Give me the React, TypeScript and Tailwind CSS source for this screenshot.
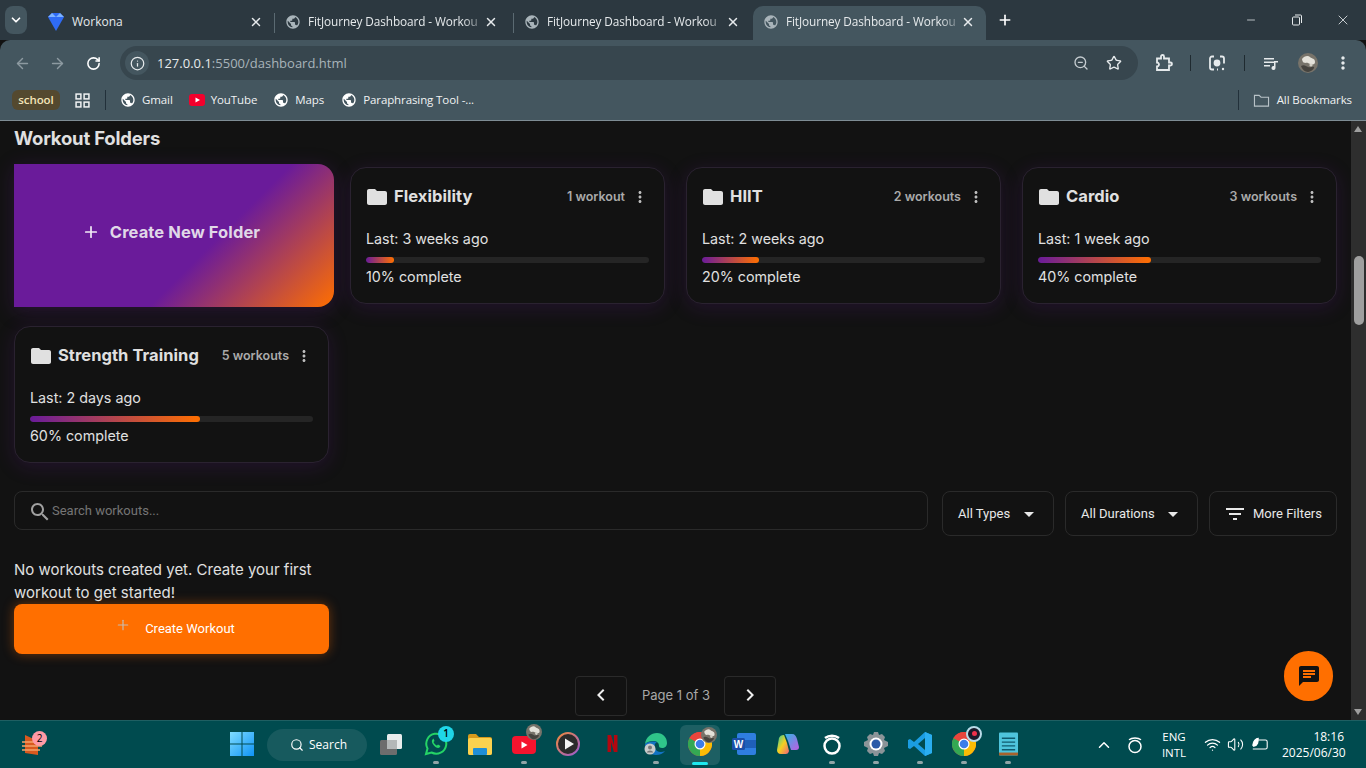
import { ArrowLeft, ArrowRight, RotateCw, Info, ZoomOut, Star, X, Plus, Minus, ChevronDown, ChevronUp, Search, Wifi, Volume2 } from "lucide-react"

const GLOBE = "M12 2C6.48 2 2 6.48 2 12s4.48 10 10 10 10-4.48 10-10S17.52 2 12 2zm-1 17.93c-3.95-.49-7-3.85-7-7.93 0-.62.08-1.21.21-1.79L9 15v1c0 1.1.9 2 2 2v1.93zm6.9-2.54c-.26-.81-1-1.39-1.9-1.39h-1v-3c0-.55-.45-1-1-1H8v-2h2c.55 0 1-.45 1-1V7h2c1.1 0 2-.9 2-2v-.41c2.93 1.19 5 4.06 5 7.41 0 2.08-.8 3.97-2.1 5.39z"
const FOLDER = "M10 4H4c-1.1 0-1.99.9-1.99 2L2 18c0 1.1.9 2 2 2h16c1.1 0 2-.9 2-2V8c0-1.1-.9-2-2-2h-8l-2-2z"
const DOTS = "M12 8c1.1 0 2-.9 2-2s-.9-2-2-2-2 .9-2 2 .9 2 2 2zm0 2c-1.1 0-2 .9-2 2s.9 2 2 2 2-.9 2-2-.9-2-2-2zm0 6c-1.1 0-2 .9-2 2s.9 2 2 2 2-.9 2-2-.9-2-2-2z"

function Mat({ d, className }: { d: string; className?: string }) {
    return (
        <svg viewBox="0 0 24 24" fill="currentColor" className={className}>
            <path d={d} />
        </svg>
    )
}

function Tab({ active, sep }: { active?: boolean; sep?: boolean }) {
    return (
        <div className={`relative flex items-center h-[34px] mt-[6px] pb-[2px] ${active ? "w-[233px] pl-[10px] pr-[11px] bg-[#44565f] rounded-t-[10px]" : sep ? "w-[239px] pl-[10px] pr-[16px]" : "w-[239px] pl-[10px] pr-[13px]"}`}>
            <Mat d={GLOBE} className="w-4 h-4 text-[#a9b4ba] shrink-0" />
            <span className="ml-[7px] flex-1 overflow-hidden whitespace-nowrap text-[11.800px] tracking-[-0.1px] text-[#e6eaec] [mask-image:linear-gradient(90deg,#000_90%,rgba(0,0,0,0.3))]">FitJourney Dashboard - Workou</span>
            <X className="w-[14px] h-[14px] ml-[4px] -mt-[1px] text-[#e6eaec] shrink-0" strokeWidth={2.5} />
            {sep && <div className="absolute right-0 top-[7px] h-[20px] w-px bg-[#5b6a72]" />}
        </div>
    )
}

function BrowserChrome() {
    return (
        <div className="shrink-0 font-['Open_Sans',sans-serif]">
            {/* tab strip */}
            <div className="h-10 bg-[#2c3840] flex items-start">
                <div className="ml-[5px] mt-[6px] w-[22px] h-[28px] rounded-lg bg-[#44565f] flex items-center justify-center">
                    <ChevronDown className="w-[14px] h-[14px] text-white" strokeWidth={3} />
                </div>
                <div className="relative flex items-center w-[248px] h-[34px] mt-[6px] pb-[2px] pl-[21px] pr-[12px]">
                    <svg viewBox="0 0 16 18" className="w-4 h-[18px] shrink-0">
                        <path d="M0 4 L4 0 H12 L16 4 L8 18 Z" fill="#2f6bf5" />
                        <path d="M0 4 L4 0 L8 4 Z M8 4 L12 0 L16 4 Z" fill="#7db2ff" />
                    </svg>
                    <span className="ml-[8px] flex-1 text-[12px] text-[#e6eaec]">Workona</span>
                    <X className="w-[14px] h-[14px] -mt-[1px] text-[#e6eaec]" strokeWidth={2.5} />
                    <div className="absolute right-0 top-[7px] h-[20px] w-px bg-[#5b6a72]" />
                </div>
                <Tab sep />
                <Tab />
                <Tab active />
                <Plus className="w-4 h-4 ml-[11px] mt-[12px] text-white" strokeWidth={2.5} />
                <div className="ml-auto flex items-center h-[40px] text-[#e6eaec]">
                    <Minus className="w-[12px] h-[12px] mr-[34px]" strokeWidth={1.5} />
                    <svg viewBox="0 0 12 12" className="w-[12px] h-[12px] mr-[32px]" fill="none" stroke="currentColor">
                        <rect x="1.5" y="3" width="7" height="8" rx="1" />
                        <path d="M4 1h5.5a1 1 0 0 1 1 1v7" />
                    </svg>
                    <X className="w-[16px] h-[16px] mr-[15px]" strokeWidth={1.25} />
                </div>
            </div>
            {/* toolbar */}
            <div className="h-10 bg-[#44565f] rounded-t-[10px] flex items-start pt-[6px]">
                <ArrowLeft className="w-[17px] h-[17px] ml-[14px] mt-[9px] text-[#8d9aa1]" />
                <ArrowRight className="w-[17px] h-[17px] ml-[18px] mt-[9px] text-[#8d9aa1]" />
                <RotateCw className="w-[15px] h-[15px] ml-[20px] mt-[10px] text-white" strokeWidth={2.5} />
                <div className="ml-[19px] w-[1018px] h-[34px] rounded-full bg-[#37464e] flex items-center pl-[5px] pr-[16px]">
                    <div className="w-[24px] h-[24px] rounded-full bg-[#44565f] flex items-center justify-center">
                        <Info className="w-[15px] h-[15px] text-[#e6eaec]" />
                    </div>
                    <span className="ml-[8px] mt-[1px] text-[13px] text-[#e6eaec]">127.0.0.1<span className="text-[#a9b4ba]">:5500/dashboard.html</span></span>
                    <ZoomOut className="ml-auto w-[16px] h-[16px] text-[#c5ccd0]" />
                    <Star className="ml-[17px] w-[16px] h-[16px] text-[#e6eaec]" />
                </div>
                <div className="flex items-center h-[34px] text-[#e6eaec]">
                    <svg viewBox="0 0 18 18" className="w-[18px] h-[18px] ml-[17px]" fill="none" stroke="currentColor" strokeWidth="1.8">
                        <path d="M2 4.5h4V2.5a1.5 1.5 0 0 1 3 0v2h5v4h1.5a1.5 1.5 0 0 1 0 3H14v4.5H2v-3.5a2 2 0 0 0 0-4z" />
                    </svg>
                    <div className="ml-[17px] w-px h-[16px] bg-[#1f2a30]" />
                    <svg viewBox="0 0 18 18" className="w-[18px] h-[18px] ml-[17px]" fill="none" stroke="currentColor" strokeWidth="1.8">
                        <path d="M6 2.5H4a2 2 0 0 0-2 2v9a2 2 0 0 0 2 2h2M12 2.5h2a2 2 0 0 1 2 2v5M9 15.5h1" />
                        <circle cx="9" cy="9" r="2.5" fill="currentColor" />
                        <circle cx="15" cy="15" r="1.2" fill="currentColor" stroke="none" />
                    </svg>
                    <div className="ml-[18px] w-px h-[16px] bg-[#1f2a30]" />
                    <svg viewBox="0 0 18 18" className="w-[18px] h-[18px] ml-[17px]" fill="currentColor">
                        <path d="M2 4h10v1.5H2zM2 7.5h10V9H2zM2 11h6v1.5H2zM12 7h4v1.5h-2.5v5.5a2 2 0 1 1-1.5-1.9z" />
                    </svg>
                    <Avatar className="w-[20px] h-[20px] ml-[18px]" />
                    <Mat d={DOTS} className="w-[20px] h-[20px] ml-[15px]" />
                </div>
            </div>
            {/* bookmarks */}
            <div className="h-[41px] bg-[#44565f] border-b border-[#7e8c94] flex items-center text-[11.500px] tracking-[-0.1px] text-[#f0f2f3]">
                <div className="ml-[12px] h-[20px] w-[48px] rounded-md bg-[#54492f] flex items-center justify-center font-semibold text-[#f3e4b8]">school</div>
                <svg viewBox="0 0 14 14" className="w-[15px] h-[15px] ml-[15px]" fill="none" stroke="currentColor" strokeWidth="1.4">
                    <rect x="1" y="1" width="4.5" height="4.5" /><rect x="8.5" y="1" width="4.5" height="4.5" />
                    <rect x="1" y="8.5" width="4.5" height="4.5" /><rect x="8.5" y="8.5" width="4.5" height="4.5" />
                </svg>
                <div className="ml-[15px] w-px h-[20px] bg-[#22303a]" />
                <Mat d={GLOBE} className="ml-[14px] w-4 h-4 text-white" />
                <span className="ml-[6px]">Gmail</span>
                <svg viewBox="0 0 16 12" className="ml-[16px] w-4 h-3">
                    <rect width="16" height="12" rx="3" fill="#f4002c" />
                    <path d="M6.5 3.5 11 6l-4.500 2.500z" fill="#fff" />
                </svg>
                <span className="ml-[6px]">YouTube</span>
                <Mat d={GLOBE} className="ml-[16px] w-4 h-4 text-white" />
                <span className="ml-[6px]">Maps</span>
                <Mat d={GLOBE} className="ml-[17px] w-4 h-4 text-white" />
                <span className="ml-[6px]">Paraphrasing Tool -...</span>
                <div className="ml-auto w-px h-[20px] bg-[#22303a]" />
                <svg viewBox="0 0 18 16" className="ml-[14px] w-[17px] h-[15px]" fill="none" stroke="#b8c2c7" strokeWidth="1.2">
                    <path d="M1.500 2.500h5l2 2h8v9.500h-15z" />
                </svg>
                <span className="ml-[7px] mr-[14px]">All Bookmarks</span>
            </div>
        </div>
    )
}

function Avatar({ className }: { className?: string }) {
    return (
        <svg viewBox="0 0 20 20" className={className}>
            <circle cx="10" cy="10" r="10" fill="#77736a" />
            <path d="M4 6c2-3 6-4 8-2s5 1 5 5-5 2-7 1-5 2-6-4z" fill="#e4e2da" />
            <path d="M3 13c3-2 5 0 7 1s5-1 6 0-3 5-6 5-6-3-7-6z" fill="#45433e" />
            <circle cx="13" cy="12" r="1.600" fill="#d2cfc5" />
        </svg>
    )
}

function FolderCard({ name, count, last, pct }: { name: string; count: string; last: string; pct: number }) {
    return (
        <div className="h-[137px] rounded-2xl bg-[#121212] border border-[#2a2230] shadow-[0_4px_20px_rgba(106,27,154,0.2)] px-[15px] pt-[15px]">
            <div className="flex items-center h-[27px]">
                <Mat d={FOLDER} className="w-6 h-6 text-[#e0e0e0] shrink-0 -ml-[1px]" />
                <span className="ml-[5px] text-[16.500px] font-bold text-[#e0e0e0] tracking-[0.05px]">{name}</span>
                <span className="ml-auto mt-[2px] text-[12.500px] font-semibold text-[#aaaaaa]">{count}</span>
                <Mat d={DOTS} className="w-[18px] h-[18px] ml-[6px] text-[#bdbdbd] shrink-0" />
            </div>
            <div className="mt-[17px] h-[23px] leading-[23px] text-[14.300px] text-[#e0e0e0]">{last}</div>
            <div className="mt-[7px] h-[6px] rounded-full bg-[#252525] overflow-hidden">
                <div className="h-full rounded-full bg-[linear-gradient(90deg,#6a1b9a,#ff6f00)]" style={{ width: `${pct}%` }} />
            </div>
            <div className="mt-[2px] h-[23px] leading-[23px] text-[14.300px] text-[#e0e0e0]">{pct}% complete</div>
        </div>
    )
}

function FilterButton({ label, w }: { label: string; w: string }) {
    return (
        <div className={`${w} h-[45px] rounded-lg border border-[#2a2a2a] flex items-center justify-between pl-[15px] pr-[14px] font-['Roboto',sans-serif] text-[13px] text-[#e8e8e8]`}>
            <span>{label}</span>
            <Mat d="M7 10l5 5 5-5z" className="w-6 h-6 -mr-[2px] text-[#e8e8e8]" />
        </div>
    )
}

function Dashboard() {
    return (
        <div className="relative flex-1 flex min-h-0 overflow-hidden bg-[#121212] font-['Inter',sans-serif]">
            <div className="flex-1 min-w-0 px-[14px] overflow-hidden">
                <h2 className="mt-[4px] h-[27px] leading-[27px] text-[18.500px] font-bold text-[#e0e0e0] tracking-[-0.2px]">Workout Folders</h2>
                <div className="mt-[15px] grid grid-cols-4 gap-x-[21px] gap-y-[22px] items-start">
                    <div className="-my-[3px] w-[320px] h-[143px] rounded-r-2xl bg-[linear-gradient(135deg,#6a1b9a_0%,#6a1b9a_60%,#ff6f00_100%)] shadow-[0_4px_20px_rgba(106,27,154,0.25)] flex items-center justify-center gap-[10px] pb-[7px] pr-[6px]">
                        <Plus className="w-[18px] h-[18px] text-[#f2ecf6]" strokeWidth={2.25} />
                        <span className="text-[16.500px] font-bold text-[#e0d8e8] tracking-[0.1px]">Create New Folder</span>
                    </div>
                    <FolderCard name="Flexibility" count="1 workout" last="Last: 3 weeks ago" pct={10} />
                    <FolderCard name="HIIT" count="2 workouts" last="Last: 2 weeks ago" pct={20} />
                    <FolderCard name="Cardio" count="3 workouts" last="Last: 1 week ago" pct={40} />
                    <FolderCard name="Strength Training" count="5 workouts" last="Last: 2 days ago" pct={60} />
                </div>
                <div className="mt-[28px] flex items-start">
                    <div className="w-[914px] h-[39px] rounded-lg border border-[#2a2a2a] flex items-center pl-[13px] font-['Roboto',sans-serif] text-[13px] text-[#757575]">
                        <Mat d="M15.5 14h-.79l-.28-.27C15.41 12.59 16 11.11 16 9.5 16 5.91 13.09 3 9.5 3S3 5.91 3 9.5 5.91 16 9.5 16c1.61 0 3.09-.59 4.23-1.57l.27.28v.79l5 4.99L20.49 19l-4.99-5zm-6 0C7.01 14 5 11.99 5 9.5S7.01 5 9.5 5 14 7.01 14 9.5 11.99 14 9.5 14z" className="w-6 h-6 text-[#a0a0a0] mt-[3px]" />
                        <span>Search workouts...</span>
                    </div>
                    <div className="ml-[14px] flex gap-[11px]">
                        <FilterButton label="All Types" w="w-[112px]" />
                        <FilterButton label="All Durations" w="w-[133px]" />
                        <div className="w-[128px] h-[45px] rounded-lg border border-[#2a2a2a] flex items-center pl-[13px] font-['Roboto',sans-serif] text-[13px] text-[#e8e8e8]">
                            <Mat d="M10 18h4v-2h-4v2zM3 6v2h18V6H3zm3 7h12v-2H6v2z" className="w-6 h-6" />
                            <span className="ml-[6px]">More Filters</span>
                        </div>
                    </div>
                </div>
                <p className="mt-[22px] w-[315px] text-[15px] leading-[23px] text-[#e0e0e0]">No workouts created yet. Create your first workout to get started!</p>
                <div className="w-[315px] h-[50px] rounded-lg bg-[#ff6f00] shadow-[0_0_12px_rgba(255,111,0,0.4)] flex items-center justify-center pl-[7px] font-['Roboto',sans-serif] text-[13px] text-white">
                    <Plus className="w-[16px] h-[16px] mr-[14px] -mt-[8px] text-[#c8bcb0]" strokeWidth={1.75} />
                    <span>Create Workout</span>
                </div>
                <div className="mt-[22px] flex items-center justify-center">
                    <div className="w-[52px] h-[40px] rounded border border-[#2a2a2a] flex items-center justify-center">
                        <Mat d="M15.41 7.41 14 6l-6 6 6 6 1.41-1.41L10.83 12z" className="w-6 h-6 -mt-[3px] text-[#eeeeee]" />
                    </div>
                    <span className="mx-[15px] w-[67px] whitespace-nowrap text-center text-[13px] text-[#a8a8a8]">Page 1 of 3</span>
                    <div className="w-[52px] h-[40px] rounded border border-[#2a2a2a] flex items-center justify-center">
                        <Mat d="M10 6 8.59 7.41 13.17 12l-4.58 4.59L10 18l6-6z" className="w-6 h-6 -mt-[3px] text-[#eeeeee]" />
                    </div>
                </div>
            </div>
            {/* scrollbar */}
            <div className="relative w-[15px] bg-[#2e2e2e] shrink-0">
                <div className="absolute left-[3px] top-[5px] w-0 h-0 border-x-[4.5px] border-x-transparent border-b-[6px] border-b-[#9f9f9f]" />
                <div className="absolute left-[3px] top-[135px] w-[10px] h-[69px] rounded-full bg-[#9f9f9f]" />
                <div className="absolute left-[3px] bottom-[5px] w-0 h-0 border-x-[4.5px] border-x-transparent border-t-[6px] border-t-[#9f9f9f]" />
            </div>
            {/* chat fab */}
            <div className="absolute right-[33px] bottom-[19px] w-[49px] h-[50px] rounded-full bg-[#ff6f00] flex items-center justify-center">
                <Mat d="M20 2H4c-1.100 0-1.990.9-1.990 2L2 22l4-4h14c1.100 0 2-.9 2-2V4c0-1.100-.9-2-2-2zM6 9h12v2H6V9zm8 5H6v-2h8v2zm4-6H6V6h12v2z" className="w-6 h-6 text-[#121212]" />
            </div>
        </div>
    )
}

function Slot({ children, dot, active }: { children: React.ReactNode; dot?: boolean; active?: boolean }) {
    return (
        <div className="relative w-[44px] h-[48px] flex items-center justify-center">
            {active && <div className="absolute left-[2px] top-[4px] w-[40px] h-[40px] rounded-md bg-[#1d5f63]" />}
            <div className="relative -mt-[2px]">{children}</div>
            {dot && <div className="absolute bottom-[5px] left-[19px] w-[6px] h-[3px] rounded-full bg-[#8fa5a7]" />}
            {active && <div className="absolute bottom-[4px] left-[14px] w-[16px] h-[3px] rounded-full bg-[#1de9f0]" />}
        </div>
    )
}

function ChromeLogo({ className }: { className?: string }) {
    return (
        <svg viewBox="0 0 24 24" className={className}>
            <circle cx="12" cy="12" r="12" fill="#e8453c" />
            <path d="M12 12 1.600 6A12 12 0 0 0 12 24z" fill="#34a853" />
            <path d="M12 12v12A12 12 0 0 0 22.400 6z" fill="#fbbc05" />
            <path d="M12 12 1.600 6A12 12 0 0 1 22.400 6z" fill="#e8453c" />
            <circle cx="12" cy="12" r="5.500" fill="#fff" />
            <circle cx="12" cy="12" r="4.300" fill="#3d7de8" />
        </svg>
    )
}

function Taskbar() {
    return (
        <div className="h-12 shrink-0 bg-[#004b4f] border-t border-[#1f5f62] flex items-center font-['Open_Sans',sans-serif] text-white">
            <div className="relative ml-[22px] w-[20px] h-[24px] shrink-0">
                <svg viewBox="0 0 20 24" className="w-[20px] h-[24px]">
                    <path d="M3 2 16 8v14L3 20z" fill="#d9591e" />
                    <path d="M0 9h18M0 13h20M0 17h18" stroke="#f4a26a" strokeWidth="1.400" />
                </svg>
                <div className="absolute -top-[2px] left-[10px] w-[15px] h-[15px] rounded-full bg-[#ff9aa5] flex items-center justify-center text-[10px] text-black">2</div>
            </div>
            <div className="ml-[178px] w-[44px] h-[48px] flex items-center justify-center shrink-0">
                <svg viewBox="0 0 24 24" className="w-[24px] h-[24px] -mt-[2px]">
                    <defs>
                        <linearGradient id="w" x1="0" y1="0" x2="1" y2="1"><stop offset="0" stopColor="#7fdcff" /><stop offset="1" stopColor="#0f94f5" /></linearGradient>
                    </defs>
                    <path d="M0 0h11.500v11.500H0zM12.500 0H24v11.500H12.500zM0 12.500h11.500V24H0zM12.500 12.500H24V24H12.500z" fill="url(#w)" />
                </svg>
            </div>
            <div className="ml-[3px] w-[100px] h-[32px] rounded-full bg-[#175a5e] flex items-center pl-[23px] text-[12px] shrink-0">
                <Search className="w-[14px] h-[14px]" strokeWidth={2} />
                <span className="ml-[5px]">Search</span>
            </div>
            <div className="ml-[2px] flex shrink-0">
                <Slot>
                    <svg viewBox="0 0 24 22" className="w-[24px] h-[22px]">
                        <rect x="8" y="1" width="15" height="15" rx="1.500" fill="#e8ecec" />
                        <rect x="1" y="7" width="17" height="15" rx="1.500" fill="#6d6d6d" />
                        <rect x="8" y="7" width="10" height="9" fill="#b4b8b8" />
                    </svg>
                </Slot>
            </div>
            <div className="ml-[1px] flex shrink-0">
                <Slot dot>
                    <svg viewBox="0 0 24 24" className="w-[24px] h-[24px]" fill="none">
                        <path d="M2 22l1.500-5.500A10 10 0 1 1 7.500 20.500z" stroke="#25d366" strokeWidth="2" />
                        <path d="M8.500 7.500c-1 1-1 3 1 5.500s4.500 3.500 6 2.500l1-1.500-2.500-1.500-1 1c-1 0-3-2-3.500-3.500l1-1-1-2.500z" fill="#25d366" />
                    </svg>
                    <div className="absolute -top-[6px] -right-[6px] w-[16px] h-[16px] rounded-full bg-[#1fd6e8] flex items-center justify-center text-[10px] text-black font-semibold">1</div>
                </Slot>
                <Slot>
                    <svg viewBox="0 0 24 22" className="w-[24px] h-[22px]">
                        <path d="M0 3a2 2 0 0 1 2-2h6l3 3h11a2 2 0 0 1 2 2v14a2 2 0 0 1-2 2H2a2 2 0 0 1-2-2z" fill="#d69a1c" />
                        <rect y="5" width="24" height="17" rx="2" fill="#fbd24f" />
                        <rect x="5" y="15" width="14" height="7" rx="1" fill="#1f8fd6" />
                    </svg>
                </Slot>
                <Slot dot>
                    <svg viewBox="0 0 24 18" className="w-[24px] h-[18px] mt-[2px]">
                        <rect width="24" height="18" rx="4" fill="#f5142e" />
                        <path d="M9.500 5.500 15.500 9l-6 3.500z" fill="#fff" />
                    </svg>
                    <Avatar className="absolute -top-[10px] -right-[6px] w-[16px] h-[16px]" />
                </Slot>
                <Slot>
                    <svg viewBox="0 0 24 24" className="w-[24px] h-[24px]">
                        <defs>
                            <linearGradient id="m" x1="0" y1="0" x2="1" y2="1"><stop offset="0" stopColor="#f08a3c" /><stop offset="1" stopColor="#9a5ad0" /></linearGradient>
                        </defs>
                        <circle cx="12" cy="12" r="11" fill="#2b2b2b" stroke="url(#m)" strokeWidth="2" />
                        <path d="M9 6.500 18 12l-9 5.500z" fill="#f4f4f4" />
                    </svg>
                </Slot>
                <Slot>
                    <svg viewBox="0 0 14 24" className="w-[11px] h-[17px]">
                        <path d="M0 0h5l4 14V0h5v24H9L5 10v14H0z" fill="#b20710" />
                    </svg>
                </Slot>
                <Slot dot>
                    <svg viewBox="0 0 24 24" className="w-[24px] h-[24px]">
                        <path d="M1 12C2 5 7 1 13 1c6 0 10 4.500 10 10 0 3-2 5-5 5-2 0-3-1-3-2 0-3-2-5-6-5-3 0-6 1-8 3z" fill="#2fc58a" />
                        <path d="M1 12c0 6 5 11 11 11 4 0 7-1.500 9-4-4 2-9 1-10-3-1-3 0-5 2-6-5-1-10 0-12 2z" fill="#1273c4" />
                        <circle cx="6" cy="17" r="5.500" fill="#c8cccc" />
                        <circle cx="6" cy="15.500" r="2" fill="#777" />
                        <path d="M2.500 20.500a4 4 0 0 1 7 0z" fill="#777" />
                    </svg>
                </Slot>
                <Slot active>
                    <ChromeLogo className="w-[24px] h-[24px]" />
                    <Avatar className="absolute -top-[5px] -right-[5px] w-[16px] h-[16px]" />
                </Slot>
                <Slot>
                    <svg viewBox="0 0 24 22" className="w-[24px] h-[22px]">
                        <rect x="5" y="0" width="19" height="22" rx="2" fill="#2f7ee0" />
                        <rect x="5" y="7" width="19" height="8" fill="#1f5fb8" />
                        <rect x="0" y="5" width="13" height="12" rx="1.500" fill="#1a4fa8" />
                        <text x="6.500" y="14.500" textAnchor="middle" fontSize="10" fontWeight="700" fill="#fff" fontFamily="Liberation Sans, sans-serif">W</text>
                    </svg>
                </Slot>
                <Slot>
                    <svg viewBox="0 0 24 24" className="w-[24px] h-[24px]">
                        <defs>
                            <linearGradient id="c1" x1="0" y1="0" x2="1" y2="1"><stop offset="0" stopColor="#2fb6e8" /><stop offset="1" stopColor="#c05ce0" /></linearGradient>
                            <linearGradient id="c2" x1="0" y1="0" x2="1" y2="1"><stop offset="0" stopColor="#2fd0a0" /><stop offset=".5" stopColor="#f5d020" /><stop offset="1" stopColor="#f0607a" /></linearGradient>
                        </defs>
                        <path d="M9 2h7c3 0 4 2 5 5l2 8c0 2-1 3-3 3h-5l-3-9z" fill="url(#c1)" />
                        <path d="M3 6c1-2 2-3 5-3l3 8 2 8c-1 3-2 3-5 3H5c-3 0-4-2-4-4z" fill="url(#c2)" />
                    </svg>
                </Slot>
                <Slot dot>
                    <svg viewBox="0 0 24 24" className="w-[24px] h-[24px]" fill="none" stroke="#fff" strokeWidth="2.500">
                        <circle cx="12" cy="14" r="7.500" />
                        <path d="M5 6c4-3 10-3 14 0" />
                    </svg>
                </Slot>
                <Slot dot>
                    <svg viewBox="0 0 24 24" className="w-[24px] h-[24px]">
                        <path d="M10 0h4l1 3 3-1 3 3-1 3 4 2v4l-4 2 1 3-3 3-3-1-1 3h-4l-1-3-3 1-3-3 1-3-4-2v-4l4-2-1-3 3-3 3 1z" fill="#8b9498" />
                        <circle cx="12" cy="12" r="6.500" fill="#fff" />
                        <circle cx="12" cy="12" r="4.500" fill="#2a5aa8" />
                    </svg>
                </Slot>
                <Slot dot>
                    <svg viewBox="0 0 24 24" className="w-[24px] h-[24px]">
                        <path d="M17 0 24 3v18l-7 3L6 14l-4 3-2-1V8l2-1 4 3z" fill="#1b9de2" />
                        <path d="M17 6 10 12l7 6z" fill="#004b4f" />
                        <path d="M17 0v24l7-3V3z" fill="#2aaef0" />
                    </svg>
                </Slot>
                <Slot dot>
                    <ChromeLogo className="w-[24px] h-[24px]" />
                    <div className="absolute -top-[6px] -right-[6px] w-[16px] h-[16px] rounded-full bg-[#1a1a2a] border-2 border-[#b9dbe8] flex items-center justify-center">
                        <div className="w-[5px] h-[5px] rounded-full bg-[#f0304a]" />
                    </div>
                </Slot>
                <Slot dot>
                    <svg viewBox="0 0 20 24" className="w-[19px] h-[24px]">
                        <rect width="20" height="24" rx="1" fill="#4ec4dc" />
                        <rect y="21" width="20" height="3" fill="#a8622c" />
                        <path d="M3 6h14M3 10h14M3 14h14M3 18h14" stroke="#0f5a6e" strokeWidth="1.500" />
                    </svg>
                </Slot>
            </div>
            <div className="ml-auto flex items-center shrink-0 text-[12px]">
                <ChevronUp className="w-[18px] h-[18px]" strokeWidth={2} />
                <svg viewBox="0 0 24 24" className="ml-[13px] w-[18px] h-[18px]" fill="none" stroke="#fff" strokeWidth="2">
                    <circle cx="12" cy="14" r="8" />
                    <path d="M4 5c4-3 12-3 16 0" />
                </svg>
                <div className="ml-[16px] w-[28px] text-center leading-[16px] text-[11.500px]">
                    <div>ENG</div>
                    <div>INTL</div>
                </div>
                <Wifi className="ml-[16px] w-[17px] h-[17px]" strokeWidth={1.75} />
                <Volume2 className="ml-[6px] w-[17px] h-[17px]" strokeWidth={1.5} />
                <svg viewBox="0 0 20 16" className="ml-[7px] w-[18px] h-[15px]" fill="none" stroke="#fff" strokeWidth="1.200">
                    <path d="M8 3h8a2 2 0 0 1 2 2v6a2 2 0 0 1-2 2H2" />
                    <path d="M2 9c0-5 4-8 6-8 0 4 0 8-5 9z" fill="#fff" />
                </svg>
                <div className="ml-[13px] mr-[22px] w-[62px] text-right leading-[16px] text-[12px]">
                    <div>18:16</div>
                    <div className="whitespace-nowrap">2025/06/30</div>
                </div>
            </div>
        </div>
    )
}

export default function App() {
    return (
        <div className="h-screen w-full flex flex-col overflow-hidden bg-[#121212]">
            <BrowserChrome />
            <Dashboard />
            <Taskbar />
        </div>
    )
}
